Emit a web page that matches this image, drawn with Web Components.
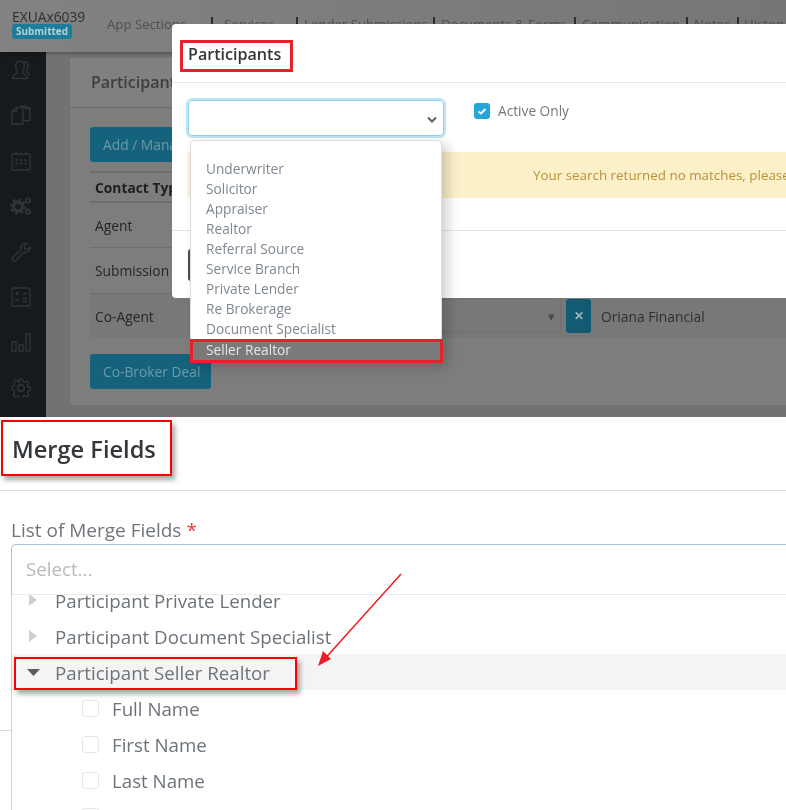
<!DOCTYPE html>
<html>
<head>
<meta charset="utf-8">
<title>Participants and Merge Fields</title>
<style>
    html, body { margin: 0; padding: 0; background: #fff; }
    body { width: 786px; height: 810px; overflow: hidden; font-family: "Open Sans", "Noto Sans", sans-serif; }
</style>
</head>
<body>

<participants-shot>
    <app-header slot="header"></app-header>
    <side-nav slot="nav"></side-nav>
    <deal-card slot="main"></deal-card>
    <participants-modal slot="over"></participants-modal>
</participants-shot>

<merge-fields>
    <tree-row>Participant Private Lender</tree-row>
    <tree-row>Participant Document Specialist</tree-row>
    <tree-row open marked>Participant Seller Realtor</tree-row>
    <tree-row leaf>Full Name</tree-row>
    <tree-row leaf>First Name</tree-row>
    <tree-row leaf>Last Name</tree-row>
    <tree-row leaf>Company</tree-row>
</merge-fields>

<script>
/* || Top screenshot: page behind the dialog */
ParticipantsShotTemplate = document.createElement("template");
ParticipantsShotTemplate.innerHTML = `
    <style>
        :host {
            display: grid;
            position: relative;
            grid-template-columns: 46px 1fr;
            grid-template-rows: 52px 1fr;
            height: 417px;
            overflow: hidden;
            background: #727272;
            filter: blur(.35px);
        }
        #header { grid-column: 1 / 3; display: block; box-shadow: 0 2px 3px rgba(0,0,0,.25); z-index: 1; }
        #over { position: absolute; left: 172px; top: 24px; right: -60px; z-index: 2; }
    </style>
    <div id=header><slot name="header"></slot></div>
    <slot name="nav"></slot>
    <slot name="main"></slot>
    <div id=over><slot name="over"></slot></div>
`;

class ParticipantsShot extends HTMLElement {
    constructor() {
        super();
        this.attachShadow( {mode: 'open'} );
        this.shadowRoot.appendChild(ParticipantsShotTemplate.content.cloneNode(true));
    }
}
customElements.define("participants-shot", ParticipantsShot);


AppHeaderTemplate = document.createElement("template");
AppHeaderTemplate.innerHTML = `
    <style>
        :host {
            display: flex;
            height: 52px;
            box-sizing: border-box;
            padding: 8px 0 0 12px;
            background: linear-gradient(90deg, #828282, #767676);
            font-size: 13.8px;
            color: #2f2f2f;
            white-space: nowrap;
        }
        #deal { width: 95px; flex: none; line-height: 17px; }
        #badge {
            display: block;
            width: 60px;
            height: 15px;
            margin-top: -1px;
            border-radius: 3px;
            background: #1c7d9b;
            color: #b6ced6;
            font-size: 10px;
            font-weight: 700;
            line-height: 15px;
            text-align: center;
        }
        nav { display: flex; color: #4e4e4e; font-size: 13.2px; line-height: 32px; }
        nav span { flex: none; }
        nav i { font-style: normal; font-size: 10px; margin-left: 3px; }
        nav u { flex: none; width: 2px; height: 14px; margin: 9px 6px 0 0; background: #2e2e2e; }
    </style>
    <div id=deal>EXUAx6039<span id=badge>Submitted</span></div>
    <nav>
        <span style="width:104px">App Sections<i>&#9662;</i></span><u style="margin-right:11px"></u>
        <span style="width:72px">Services<i>&#9662;</i></span><u></u>
        <span style="width:129px">Lender Submissions</span><u></u>
        <span style="width:133px">Documents &amp; Forms</span><u></u>
        <span style="width:104px">Communication</span><u></u>
        <span style="width:43px">Notes</span><u style="margin-right:5px"></u>
        <span>History</span>
    </nav>
`;

class AppHeader extends HTMLElement {
    constructor() {
        super();
        this.attachShadow( {mode: 'open'} );
        this.shadowRoot.appendChild(AppHeaderTemplate.content.cloneNode(true));
    }
}
customElements.define("app-header", AppHeader);


SideNavTemplate = document.createElement("template");
SideNavTemplate.innerHTML = `
    <style>
        :host {
            display: flex;
            flex-direction: column;
            align-items: center;
            gap: 25.4px;
            padding: 8px 4px 0 0;
            background: #171a1d;
        }
        svg { width: 20px; height: 20px; fill: none; stroke: #2e3439; stroke-width: 1.4; flex: none; }
    </style>
    <svg viewBox="0 0 20 20"><path d="M1.500 18.500c0-3.500 2.500-4.300 5-5.300v-2C5 10 4.700 8 4.700 6c0-3 2-4.700 4.300-4.700S13.300 3 13.300 6c0 2-.3 4-1.800 5.200v2c2.500 1 5 1.800 5 5.300z"/><path d="M13 1.800c2.500 0 4 1.800 4 4.200 0 1.800-.3 3.200-1.300 4.300v1.500c1.300.5 2.800 1.200 2.800 3"/></svg>
    <svg viewBox="0 0 20 20"><path d="M1 6.500 5.500 2.500H12V19H1z"/><path d="M1 6.500H5.500V2.500"/><path d="M9 2.500 11.500 .8H14V3.500h5V15.500H12"/><path d="M14 .8 19 3.500"/></svg>
    <svg viewBox="0 0 20 20"><rect x="1" y="3" width="18" height="16" rx="1"/><path d="M5 .5v3M15 .5v3"/><path d="M4.500 9h2M9 9h2M13.500 9h2M4.500 12.500h2M9 12.500h2M13.500 12.500h2" stroke-width="2"/></svg>
    <svg viewBox="0 0 22 20" style="width:22px"><circle cx="8" cy="10.500" r="4.500" stroke-width="3.500"/><circle cx="8" cy="10.500" r="7" stroke-width="2.500" stroke-dasharray="2.700 2.800"/><circle cx="18" cy="4.500" r="2.200" stroke-width="1.800"/><circle cx="18" cy="15.500" r="2.200" stroke-width="1.800"/></svg>
    <svg viewBox="0 0 20 20"><path d="M1.500 15.800 10 7.500C9 4 11.500.8 15 1.200l1 .2-3 3 .6 2.600 2.600.7 3-3c.6 3.800-2.600 6.500-6.300 5.500l-8.200 8.600c-1.700 1.500-4.800-1-3.200-3z"/></svg>
    <svg viewBox="0 0 20 20"><rect x="1" y="1" width="18" height="18" rx="1"/><path d="M4 6.500h4M6 4.500v4M12 6.500h4M4 13h4M12 11.500h4M12 14.500h4"/></svg>
    <svg viewBox="0 0 20 20"><rect x="1" y="10" width="4" height="9"/><rect x="8" y="13" width="4" height="6"/><rect x="15" y="2" width="4" height="17"/></svg>
    <svg viewBox="0 0 20 20"><circle cx="10" cy="10" r="3.200"/><path d="M8.500 1h3l.5 2.700 1.900.8 2.300-1.500 2 2-1.500 2.300.8 1.900 2.500.5v3l-2.500.5-.8 1.900 1.500 2.300-2 2-2.300-1.500-1.900.8-.5 2.500h-3l-.5-2.500-1.900-.8-2.300 1.500-2-2 1.500-2.300-.8-1.900L.5 11.500v-3L3 8l.8-1.900L2.300 3.800l2-2 2.300 1.500L8 4.500z" transform="translate(.4 .2) scale(.96)"/></svg>
`;

class SideNav extends HTMLElement {
    constructor() {
        super();
        this.attachShadow( {mode: 'open'} );
        this.shadowRoot.appendChild(SideNavTemplate.content.cloneNode(true));
    }
}
customElements.define("side-nav", SideNav);


DealCardTemplate = document.createElement("template");
DealCardTemplate.innerHTML = `
    <style>
        :host {
            display: block;
            height: 347px;
            margin: 6px 0 0 24px;
            border-radius: 4px 0 0 4px;
            background: #7d7d7d;
            font-size: 13.8px;
            color: #262626;
            white-space: nowrap;
        }
        #title {
            height: 49px;
            padding-left: 21px;
            border-bottom: 1px solid #6d6d6d;
            background: #808080;
            font-size: 16px;
            font-weight: 600;
            color: #3e3e3e;
            line-height: 48px;
        }
        #body { padding: 19px 0 0 20px; }
        .btn {
            display: block;
            box-sizing: border-box;
            height: 35px;
            padding: 0 13px;
            border-radius: 3px;
            background: #14627b;
            color: #6d9aa8;
            line-height: 35px;
        }
        #add { width: 170px; margin-bottom: 9px; }
        #coBroker { width: 121px; margin-top: 16px; }
        .row { display: flex; align-items: center; box-sizing: border-box; padding-left: 5px; border-top: 1px solid #6d6d6d; height: 45px; }
        .row.head { height: 31px; font-weight: 700; color: #1e1e1e; border-top-width: 2px; border-bottom: 1px solid #6d6d6d; }
        .row.tall { height: 46px; }
        .row.shade { background: #787878; }
        #pick {
            box-sizing: border-box;
            flex: none;
            width: 150px;
            height: 34px;
            margin-left: 316px;
            padding-right: 5px;
            border: 1px solid #6f6f6f;
            border-radius: 3px;
            color: #4a4a4a;
            font-size: 13px;
            line-height: 32px;
            text-align: right;
        }
        #clear {
            flex: none;
            width: 25px;
            height: 34px;
            margin: 0 10px 0 5px;
            border-radius: 3px;
            background: #125c73;
            color: #9fb6bd;
            font-size: 12px;
            font-weight: 700;
            line-height: 34px;
            text-align: center;
        }
    </style>
    <div id=title>Participants</div>
    <div id=body>
        <span class=btn id=add>Add / Manage</span>
        <div class="row head">Contact Type</div>
        <div class=row>Agent</div>
        <div class="row tall">Submission Agent</div>
        <div class="row shade"><span style="width:0;flex:none">Co-Agent</span><span id=pick>&#9662;</span><span id=clear>&#10005;</span><span style="color:#2e2e2e">Oriana Financial</span></div>
        <span class=btn id=coBroker>Co-Broker Deal</span>
    </div>
`;

class DealCard extends HTMLElement {
    constructor() {
        super();
        this.attachShadow( {mode: 'open'} );
        this.shadowRoot.appendChild(DealCardTemplate.content.cloneNode(true));
    }
}
customElements.define("deal-card", DealCard);


/* || Dialog */
ParticipantsModalTemplate = document.createElement("template");
ParticipantsModalTemplate.innerHTML = `
    <style>
        :host {
            display: block;
            position: relative;
            height: 274px;
            border-radius: 4px 0 0 4px;
            background: #fff;
            color: #6b6f76;
            font-size: 13.7px;
            white-space: nowrap;
        }
        #head { height: 59px; box-sizing: border-box; padding: 16px 0 0 8px; border-bottom: 1px solid #e6e8ea; }
        #head b {
            display: inline-block;
            box-sizing: border-box;
            width: 113px;
            height: 32px;
            padding-left: 5px;
            border: 3px solid #e8202c;
            color: #33373b;
            font-size: 16.1px;
            font-weight: 600;
            line-height: 23px;
        }
        #filters { display: flex; height: 69px; box-sizing: border-box; padding: 17px 0 0 16px; }
        #select {
            box-sizing: border-box;
            width: 256px;
            height: 36px;
            padding-right: 6px;
            border: 1px solid #8fd0ea;
            border-radius: 4px;
            box-shadow: 0 0 0 2px #bfe6f6;
            text-align: right;
            line-height: 34px;
        }
        #select svg { width: 10px; height: 7px; fill: none; stroke: #58616b; stroke-width: 2; }
        #active { display: flex; gap: 8px; margin: 3px 0 0 30px; height: 16px; line-height: 16px; color: #73777c; }
        #check { width: 16px; height: 16px; border-radius: 3px; background: #25a5d8; }
        #check svg { display: block; width: 16px; height: 16px; fill: none; stroke: #fff; stroke-width: 2; }
        #alert {
            margin-left: 16px;
            height: 46px;
            padding-left: 345px;
            background: #fdf0c9;
            color: #b3923a;
            font-size: 13.4px;
            line-height: 46px;
            overflow: hidden;
        }
        #foot { margin-top: 32px; border-top: 1px solid #dfe3ea; padding: 18px 0 0 16px; }
        #close { width: 80px; height: 32px; border-radius: 3px; background: #4d4f52; }
        #list {
            position: absolute;
            left: 18px;
            top: 116px;
            width: 252px;
            padding: 18px 0 0;
            box-sizing: border-box;
            background: #fff;
            border: 1px solid #dcdcdc;
            border-bottom: 0;
            border-radius: 5px 5px 0 0;
            box-shadow: 6px 4px 12px rgba(0,0,0,.18);
            color: #7f8791;
            line-height: 20px;
        }
        #list div { padding-left: 15px; }
        #list #seller {
            box-sizing: border-box;
            height: 24px;
            margin: 0 -2px 0 -1px;
            padding-left: 13px;
            border: 3px solid #e8202c;
            background: #7a7a7a;
            color: #e6e6e6;
            line-height: 16px;
        }
    </style>
    <div id=head><b>Participants</b></div>
    <div id=filters>
        <div id=select><svg viewBox="0 0 10 7"><path d="M1 1.500 5 5.500 9 1.500"/></svg></div>
        <div id=active><span id=check><svg viewBox="0 0 16 16"><path d="M4.500 8.500 7 10.500 11.500 6"/></svg></span>Active Only</div>
    </div>
    <div id=alert>Your search returned no matches, please adjust your search criteria</div>
    <div id=foot><div id=close></div></div>
    <div id=list>
        <div>Underwriter</div>
        <div>Solicitor</div>
        <div>Appraiser</div>
        <div>Realtor</div>
        <div>Referral Source</div>
        <div>Service Branch</div>
        <div>Private Lender</div>
        <div>Re Brokerage</div>
        <div>Document Specialist</div>
        <div id=seller>Seller Realtor</div>
    </div>
`;

class ParticipantsModal extends HTMLElement {
    constructor() {
        super();
        this.attachShadow( {mode: 'open'} );
        this.shadowRoot.appendChild(ParticipantsModalTemplate.content.cloneNode(true));
    }
}
customElements.define("participants-modal", ParticipantsModal);


/* || Bottom screenshot */
MergeFieldsTemplate = document.createElement("template");
MergeFieldsTemplate.innerHTML = `
    <style>
        :host {
            display: block;
            position: relative;
            height: 393px;
            overflow: hidden;
            background: #fff;
            color: #6d737b;
            font-size: 18.7px;
            white-space: nowrap;
            filter: blur(.3px);
        }
        #head { height: 74px; box-sizing: border-box; padding: 3px 0 0 1px; border-bottom: 1px solid #d9dde1; }
        #head b {
            display: block;
            box-sizing: border-box;
            width: 171px;
            height: 56px;
            padding-left: 9px;
            border: 2px solid #f00;
            box-shadow: 3px 4px 5px rgba(0,0,0,.35);
            color: #33373b;
            font-size: 23.6px;
            font-weight: 600;
            line-height: 55px;
        }
        label { display: block; margin: 24px 0 0 11px; height: 29px; font-size: 19px; line-height: 30px; color: #6f747a; }
        label i { font-style: normal; color: #f2353f; }
        #select {
            box-sizing: border-box;
            height: 51px;
            margin-left: 11px;
            padding-left: 14px;
            border: 1px solid #a9c5dc;
            border-bottom-color: #e8eaec;
            border-right: 0;
            border-radius: 5px 0 0 0;
            color: #b9b9b9;
            line-height: 48px;
        }
        #lower { display: flex; }
        #gutter { flex: none; width: 11px; height: 135px; border-bottom: 1px solid #d5d8dc; }
        #tree { flex: 1; height: 216px; overflow: hidden; border-left: 1px solid #cfd3d8; }
        #rows { margin-top: -13px; }
        #arrow { position: absolute; left: 310px; top: 150px; width: 100px; height: 105px; }
    </style>
    <div id=head><b>Merge Fields</b></div>
    <label>List of Merge Fields <i>*</i></label>
    <div id=select>Select...</div>
    <div id=lower>
        <div id=gutter></div>
        <div id=tree><div id=rows><slot></slot></div></div>
    </div>
    <svg id=arrow viewBox="0 0 100 105"><path d="M91 7 11 96" stroke="#ee1c25" stroke-width="1.500" fill="none"/><path d="M8 99 13 84 21 92z" fill="#ee1c25"/></svg>
`;

class MergeFields extends HTMLElement {
    constructor() {
        super();
        this.attachShadow( {mode: 'open'} );
        this.shadowRoot.appendChild(MergeFieldsTemplate.content.cloneNode(true));
    }
}
customElements.define("merge-fields", MergeFields);


TreeRowTemplate = document.createElement("template");
TreeRowTemplate.innerHTML = `
    <style>
        :host { display: flow-root; height: 36px; }
        :host([open]) { background: #f4f4f4; }
        #inner {
            display: flex;
            align-items: center;
            box-sizing: border-box;
            height: 36px;
            padding-left: 17px;
        }
        #icon { width: 26px; flex: none; }
        #icon svg { width: 14px; height: 14px; fill: #cfcfcf; overflow: visible; }
        #icon #closed { display: block; }
        #icon #opened { display: none; fill: #5c5c5c; }
        :host([open]) #icon #closed { display: none; }
        :host([open]) #icon #opened { display: block; }
        #box { display: none; box-sizing: border-box; width: 17px; height: 17px; margin: 0 13px 0 53px; border: 1px solid #e6e6e6; border-radius: 3px; flex: none; }
        :host([leaf]) #icon { display: none; }
        :host([leaf]) #box { display: block; }
        :host([marked]) #inner {
            width: 283px;
            height: 33px;
            margin: 3px 0 0 2px;
            padding: 0 0 2px 13px;
            border: 2px solid #f00;
            box-shadow: 3px 4px 5px rgba(0,0,0,.35);
        }
    </style>
    <div id=inner>
        <span id=icon>
            <svg id=closed viewBox="0 0 14 14"><path d="M0 1 8 7 0 13z"/></svg>
            <svg id=opened viewBox="0 0 14 14"><path d="M-2 3H11L4.500 10z"/></svg>
        </span>
        <span id=box></span>
        <slot></slot>
    </div>
`;

class TreeRow extends HTMLElement {
    constructor() {
        super();
        this.attachShadow( {mode: 'open'} );
        this.shadowRoot.appendChild(TreeRowTemplate.content.cloneNode(true));
    }
}
customElements.define("tree-row", TreeRow);
</script>
</body>
</html>
